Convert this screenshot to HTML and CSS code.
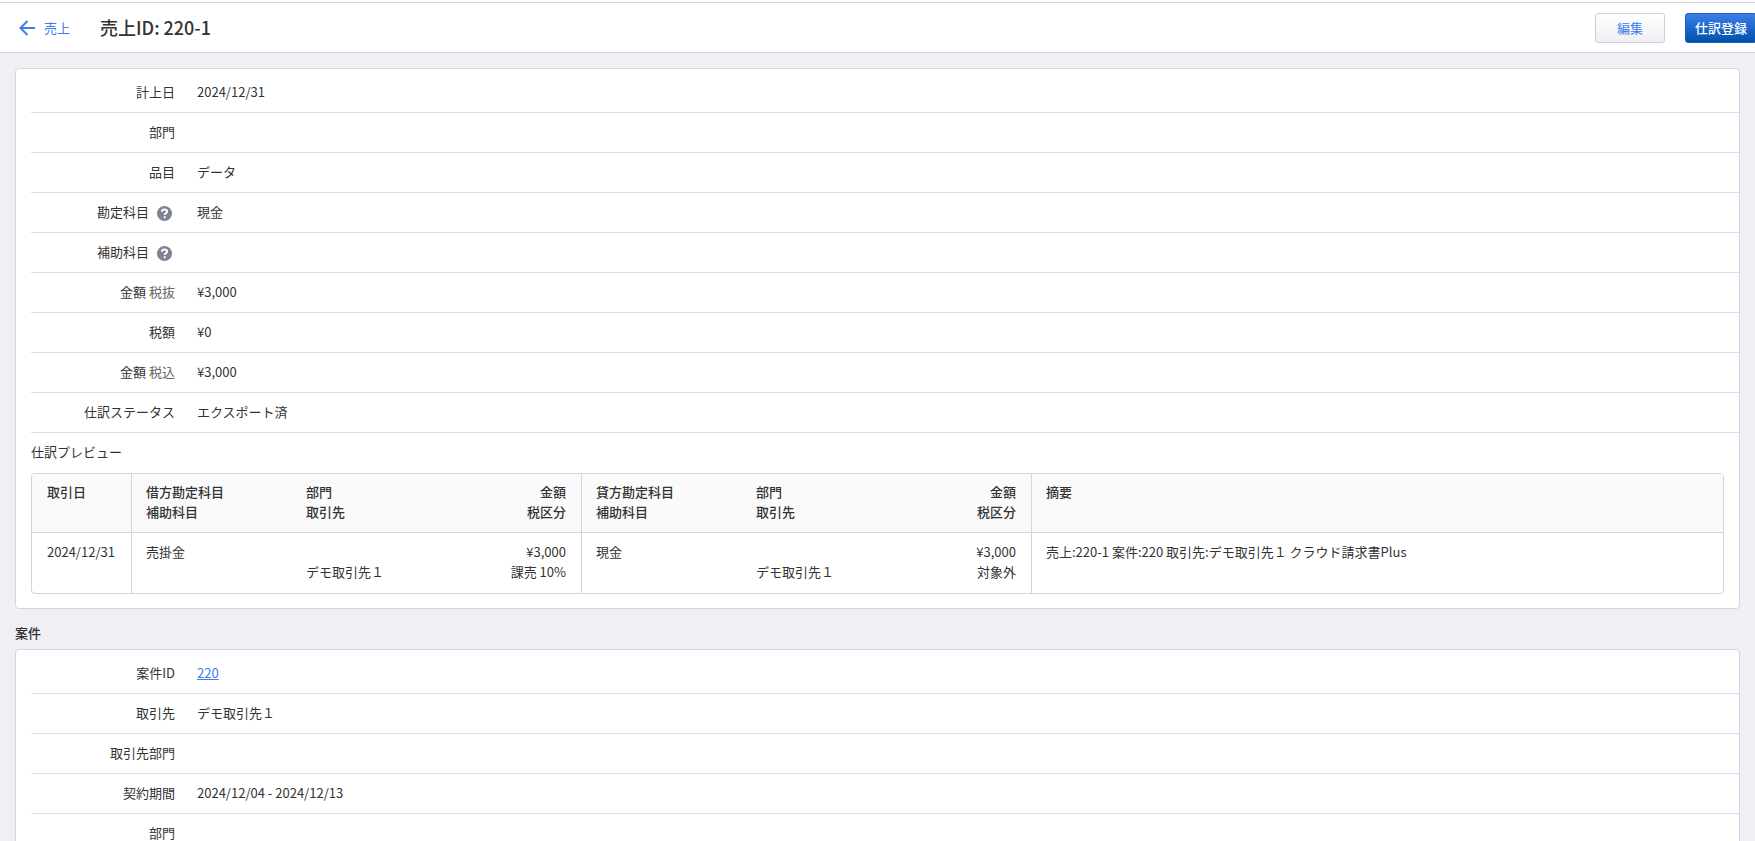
FILE: index.html
```
<!DOCTYPE html>
<html lang="ja">
<head>
<meta charset="utf-8">
<meta name="viewport" content="width=device-width, initial-scale=1">
<title>売上ID: 220-1</title>
<link rel="stylesheet" href="styles.css">
</head>
<body>
<header class="page-header">
  <a class="back-link" href="#">
    <svg class="back-icon" viewBox="0 0 16 16" aria-hidden="true"><path d="M8.5 1 1.5 8l7 7M1.5 8H16"/></svg>
    <span>売上</span>
  </a>
  <h1 class="page-title">売上ID: 220-1</h1>
  <div class="actions">
    <button class="btn" type="button">編集</button>
    <button class="btn btn-primary" type="button">仕訳登録</button>
  </div>
</header>
<main class="content">
  <section class="card">
    <dl class="fields">
      <div class="field"><dt>計上日</dt><dd>2024/12/31</dd></div>
      <div class="field"><dt>部門</dt><dd></dd></div>
      <div class="field"><dt>品目</dt><dd>データ</dd></div>
      <div class="field"><dt>勘定科目<button class="help" type="button" aria-label="勘定科目のヘルプ"><svg viewBox="0 0 16 16" aria-hidden="true"><circle cx="8" cy="8" r="8"/><path d="M5.2 6.2C5.2 4.5 6.4 3.7 8 3.7s2.8.8 2.8 2.2c0 1.8-2.6 1.8-2.6 3.6M8.2 10.8v2.3"/></svg></button></dt><dd>現金</dd></div>
      <div class="field"><dt>補助科目<button class="help" type="button" aria-label="補助科目のヘルプ"><svg viewBox="0 0 16 16" aria-hidden="true"><circle cx="8" cy="8" r="8"/><path d="M5.2 6.2C5.2 4.5 6.4 3.7 8 3.7s2.8.8 2.8 2.2c0 1.8-2.6 1.8-2.6 3.6M8.2 10.8v2.3"/></svg></button></dt><dd></dd></div>
      <div class="field"><dt>金額 <span class="note">税抜</span></dt><dd>¥3,000</dd></div>
      <div class="field"><dt>税額</dt><dd>¥0</dd></div>
      <div class="field"><dt>金額 <span class="note">税込</span></dt><dd>¥3,000</dd></div>
      <div class="field"><dt>仕訳ステータス</dt><dd>エクスポート済</dd></div>
    </dl>
    <div class="preview">
      <h2 class="preview-title">仕訳プレビュー</h2>
      <table class="journal">
        <colgroup>
          <col class="col-date"><col class="col-text"><col class="col-text"><col class="col-amount"><col class="col-text"><col class="col-text"><col class="col-amount"><col>
        </colgroup>
        <thead>
          <tr>
            <th class="date divided">取引日</th>
            <th>借方勘定科目<br>補助科目</th>
            <th>部門<br>取引先</th>
            <th class="amount divided">金額<br>税区分</th>
            <th>貸方勘定科目<br>補助科目</th>
            <th>部門<br>取引先</th>
            <th class="amount divided">金額<br>税区分</th>
            <th>摘要</th>
          </tr>
        </thead>
        <tbody>
          <tr>
            <td class="date divided">2024/12/31</td>
            <td>売掛金</td>
            <td><br>デモ取引先１</td>
            <td class="amount divided">¥3,000<br>課売 10%</td>
            <td>現金</td>
            <td><br>デモ取引先１</td>
            <td class="amount divided">¥3,000<br>対象外</td>
            <td>売上:220-1 案件:220 取引先:デモ取引先１ クラウド請求書Plus</td>
          </tr>
        </tbody>
      </table>
    </div>
  </section>
  <h2 class="section-title">案件</h2>
  <section class="card">
    <dl class="fields">
      <div class="field"><dt>案件ID</dt><dd><a class="link" href="#">220</a></dd></div>
      <div class="field"><dt>取引先</dt><dd>デモ取引先１</dd></div>
      <div class="field"><dt>取引先部門</dt><dd></dd></div>
      <div class="field"><dt>契約期間</dt><dd>2024/12/04 - 2024/12/13</dd></div>
      <div class="field"><dt>部門</dt><dd></dd></div>
    </dl>
  </section>
</main>
</body>
</html>
```
FILE: styles.css
```
* { box-sizing: border-box; }

body {
  margin: 0;
  height: 100vh;
  overflow: hidden;
  border-top: 2px solid #fff;
  background: #eff0f5;
  color: #333;
  font-family: "Noto Sans CJK JP", sans-serif;
  font-size: 13px;
  line-height: 20px;
}

h1, h2, dl, dd { margin: 0; font-size: inherit; font-weight: inherit; }

.page-header {
  display: flex;
  align-items: center;
  height: 51px;
  padding: 1px 0 0 19px;
  background: #fff;
  border: solid #d2d5dd;
  border-width: 1px 0;
  overflow: hidden;
}

.back-link {
  display: flex;
  align-items: center;
  gap: 9px;
  color: #3b7de9;
  text-decoration: none;
}

.back-icon {
  width: 16px;
  height: 16px;
  fill: none;
  stroke: #3b7de9;
  stroke-width: 2;
}

.page-title {
  margin: 0 0 2px 30px;
  font-size: 18px;
  font-weight: 500;
  line-height: 28px;
}

.actions {
  display: flex;
  gap: 20px;
  margin-left: auto;
  margin-right: -2px;
}

.btn {
  min-width: 70px;
  height: 30px;
  padding: 0 9px;
  border: 1px solid #ced0d6;
  border-radius: 3px;
  background: linear-gradient(#fff, #eff0f4);
  color: #3b7de9;
  font: inherit;
  white-space: nowrap;
}

.btn-primary {
  border-color: #1a5fbe;
  background: linear-gradient(#3b7de9, #0052ac);
  color: #fff;
  font-weight: 500;
}

.content { padding: 15px; }

.card {
  padding-top: 4px;
  background: #fff;
  border: 1px solid #d2d5dd;
  border-radius: 4px;
}

.fields { margin-left: 15px; }

.field {
  display: flex;
  height: 40px;
  padding-bottom: 1px;
  border-bottom: 1px solid #dcdee5;
}

.field dt {
  display: flex;
  align-items: center;
  justify-content: flex-end;
  flex: none;
  width: 144px;
  margin-right: 22px;
  white-space: pre;
}

.field dd { display: flex; align-items: center; }

.note { color: #666; }

.help {
  display: flex;
  margin: 3px 3px 0 8px;
  padding: 0;
  border: 0;
  background: none;
}

.help svg { width: 15px; height: 15px; }
.help circle { fill: #7e8292; }
.help path { fill: none; stroke: #fff; stroke-width: 2.2; }

.link { color: #3b7de9; }

.preview { padding: 9px 15px 14px; }

.preview-title { margin-bottom: 11px; }

.journal {
  width: 100%;
  table-layout: fixed;
  border: 1px solid #d2d5dd;
  border-radius: 4px;
  border-collapse: separate;
  border-spacing: 0;
  overflow: hidden;
}

.col-date { width: 100px; }
.col-text { width: 160px; }
.col-amount { width: 130px; }

.journal th,
.journal td {
  padding: 9px 14px 11px;
  text-align: left;
  vertical-align: top;
  font-weight: 400;
}

.journal th {
  padding: 8px 14px 10px;
  background: #fafafa;
  border-bottom: 1px solid #d2d5dd;
  font-weight: 500;
}

.journal .divided { border-right: 1px solid #d2d5dd; }
.journal .date { padding-left: 15px; padding-right: 5px; }
.journal .amount { padding-right: 15px; text-align: right; }

.section-title {
  margin: 14px 0 6px;
  font-weight: 500;
}
```
